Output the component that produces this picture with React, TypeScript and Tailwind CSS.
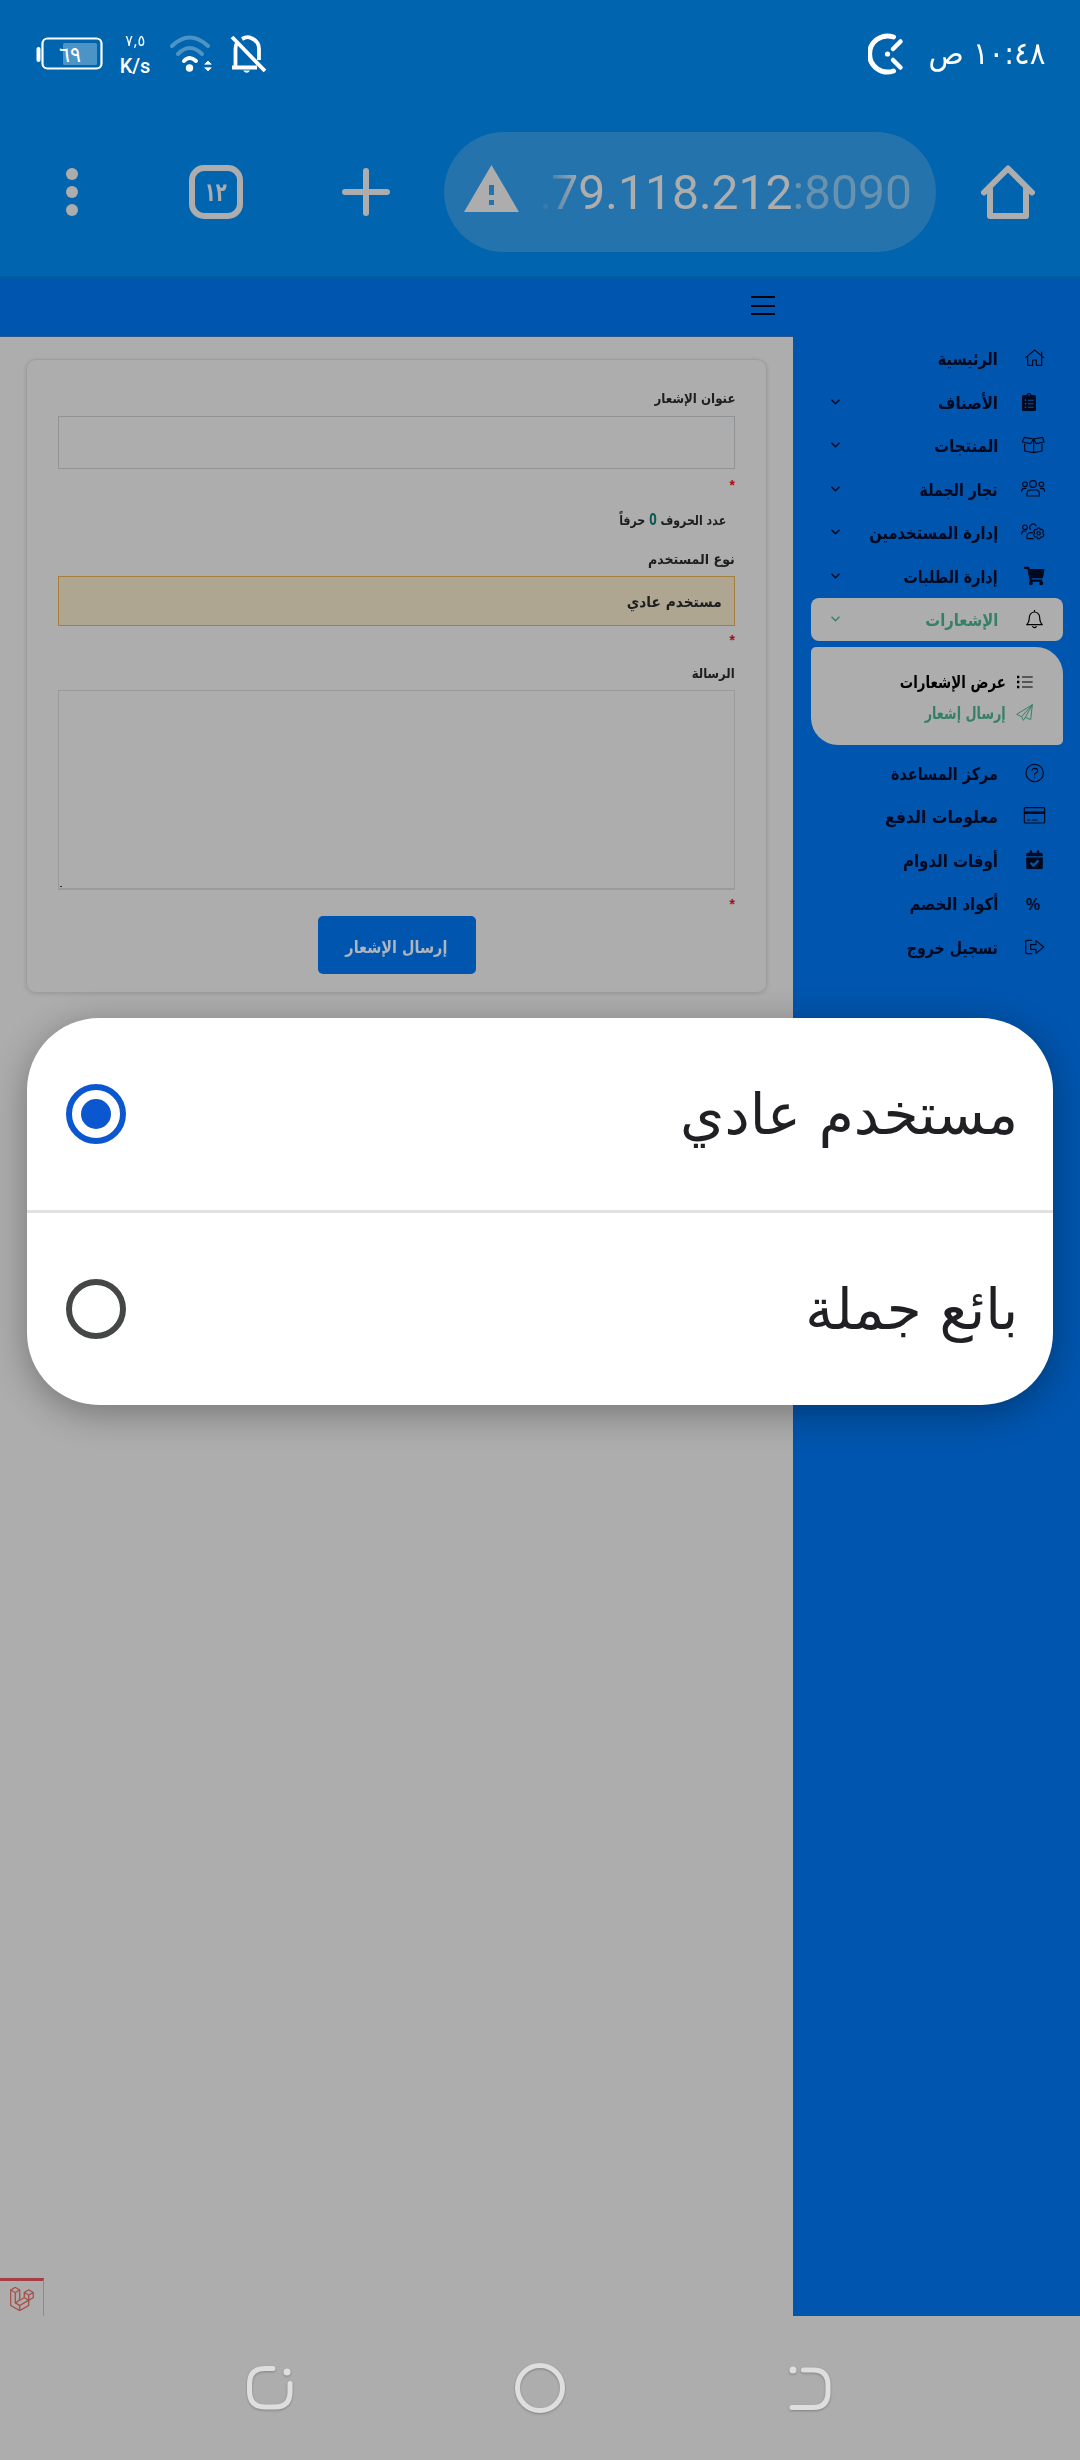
import { useLayoutEffect, useRef, type ReactNode } from "react";
import { FaClipboardList, FaShoppingCart, FaCalendarCheck, FaRegCreditCard } from "react-icons/fa";
import { SiLaravel } from "react-icons/si";

/** Single line of right-to-left text, condensed or stretched to an exact width. */
function Fit({ w, className = "", children }: { w: number; className?: string; children: ReactNode }) {
  const ref = useRef<HTMLSpanElement>(null);
  useLayoutEffect(() => {
    const el = ref.current;
    if (!el) return;
    el.style.transform = "none";
    const natural = el.getBoundingClientRect().width;
    if (natural > 0) el.style.transform = `scaleX(${w / natural})`;
  }, [w]);
  return (
    <span dir="rtl" className={`flex shrink-0 ${className}`} style={{ width: w }}>
      <span ref={ref} className="block shrink-0 origin-right whitespace-nowrap">
        {children}
      </span>
    </span>
  );
}

function Glyph({ y, className = "", children }: { y: number; className?: string; children: ReactNode }) {
  return (
    <svg
      width="26"
      height="22"
      viewBox={`720 ${y} 78 66`}
      fill="none"
      stroke="currentColor"
      strokeWidth="3.500"
      strokeLinejoin="round"
      strokeLinecap="round"
      className={`shrink-0 overflow-visible ${className}`}
    >
      {children}
    </svg>
  );
}

const HomeGlyph = (
  <Glyph y={52}>
    <path d="M737 84L764 61L791 84M743 80V107H758V91H769V107H785V80M785 78V67" />
  </Glyph>
);
const ClipboardGlyph = (
  <Glyph y={181}>
    <FaClipboardList x={719} y={186} size={56} strokeWidth={0} />
  </Glyph>
);
const BoxGlyph = (
  <Glyph y={312}>
    <path d="M734 342V363L761 368L786 363V342M761 328V368M761 327L733 322L727 336L752 341ZM761 327L788 322L792 336L769 341Z" />
  </Glyph>
);
const UsersGlyph = (
  <Glyph y={443}>
    <circle cx="759" cy="461" r="10" />
    <circle cx="735" cy="462" r="7" />
    <circle cx="784" cy="462" r="7" />
    <path d="M741 497V490Q741 479 752 479H767Q778 479 778 490V497ZM725 483Q725 475 733 474H738M794 483Q794 475 786 474H781" />
  </Glyph>
);
const UsersCogGlyph = (
  <Glyph y={575}>
    <circle cx="735" cy="594" r="7" />
    <path d="M751 600A10 10 0 1 1 768 589M760 628H741V621Q741 611 752 610H757M725 614Q725 606 733 605H738" />
    <circle cx="776" cy="612" r="5" />
    <path d="M773 596H779L781 601L786 600L791 606L788 611L792 616L788 623L782 623L779 628H773L771 623L765 623L760 616L764 612L761 606L765 600L771 601Z" />
  </Glyph>
);
const CartGlyph = (
  <Glyph y={703}>
    <FaShoppingCart x={732} y={705} size={62} strokeWidth={0} />
  </Glyph>
);
const BellGlyph = (
  <Glyph y={834} className="text-black">
    <path d="M740 884C748 877 748 872 748 862A15.500 16 0 0 1 779 862C779 872 779 877 787 884ZM763.500 841V846M758 890Q764 896 769 890" />
  </Glyph>
);
const HelpGlyph = (
  <Glyph y={363}>
    <circle cx="764" cy="396" r="26" />
    <path d="M756 388Q758 382 764 382Q773 382 773 389Q773 394 764 398V401M764 409V410" />
  </Glyph>
);
const CardGlyph = (
  <Glyph y={494}>
    <rect x="733" y="502" width="61" height="46" rx="4" />
    <path d="M733 517H794" strokeWidth="8" strokeLinecap="butt" />
    <path d="M743 539H750M757 539H771" />
  </Glyph>
);
const CalendarGlyph = (
  <Glyph y={625}>
    <FaCalendarCheck x={735} y={629} size={57} strokeWidth={0} />
  </Glyph>
);
const LogoutGlyph = (
  <Glyph y={885}>
    <path d="M755 898H742Q737 898 737 903V933Q737 938 742 938H755M752 911H768V899L791 918L768 937V925H752Z" />
  </Glyph>
);
const PercentGlyph = (
  <span className="flex w-[26px] shrink-0 justify-center pr-0 pl-0 font-['Open_Sans'] text-[17px] leading-none font-semibold">
    %
  </span>
);

type Item = { label: string; w: number; icon: ReactNode; menu?: boolean; active?: boolean };

const topItems: Item[] = [
  { label: "الرئيسية", w: 60, icon: HomeGlyph },
  { label: "الأصناف", w: 60, icon: ClipboardGlyph, menu: true },
  { label: "المنتجات", w: 64, icon: BoxGlyph, menu: true },
  { label: "تجار الجملة", w: 78, icon: UsersGlyph, menu: true },
  { label: "إدارة المستخدمين", w: 129, icon: UsersCogGlyph, menu: true },
  { label: "إدارة الطلبات", w: 94, icon: CartGlyph, menu: true },
  { label: "الإشعارات", w: 73, icon: BellGlyph, menu: true, active: true },
];

const bottomItems: Item[] = [
  { label: "مركز المساعدة", w: 107, icon: HelpGlyph },
  { label: "معلومات الدفع", w: 113, icon: CardGlyph },
  { label: "أوقات الدوام", w: 95, icon: CalendarGlyph },
  { label: "أكواد الخصم", w: 89, icon: PercentGlyph },
  { label: "تسجيل خروج", w: 91, icon: LogoutGlyph },
];

function NavRow({ item }: { item: Item }) {
  return (
    <div
      className={`flex h-[43.5px] items-center rounded-[8px] pr-[17px] pl-[20px] ${
        item.active ? "bg-[#adadad] text-[#348069]" : "text-[#00091d]"
      }`}
    >
      {item.icon}
      <Fit w={item.w} className="mr-[22px] pt-[2px] text-[17.500px] leading-[24px] font-bold">
        {item.label}
      </Fit>
      {item.menu && (
        <svg width="9" height="6" viewBox="0 0 9 6" className="mr-auto" fill="none" stroke="currentColor" strokeWidth="1.4">
          <path d="M0.500 0.700L4.500 4.700L8.500 0.700" />
        </svg>
      )}
    </div>
  );
}

function StatusBar() {
  return (
    <div dir="ltr" className="flex h-[108px] items-center text-white">
      <svg width="68" height="34" viewBox="0 0 68 34" className="ml-[36px]" fill="none">
        <rect x="0.500" y="10" width="4" height="15" rx="2" fill="white" />
        <rect x="6.500" y="1.500" width="59" height="30" rx="5" stroke="white" strokeWidth="2.200" />
        <rect x="27" y="6" width="34" height="22" rx="1.500" fill="#4d94c6" />
        <text x="34" y="24.500" fontFamily="DejaVu Sans" fontSize="22" textLength="22" lengthAdjust="spacingAndGlyphs" fill="white" textAnchor="middle">
          ٦٩
        </text>
      </svg>
      <div className="ml-[16px] flex w-[30px] flex-col items-center">
        <Fit w={20} className="text-[16px] leading-[18px]">
          ٧,٥
        </Fit>
        <span className="mt-[6px] font-[Roboto] text-[20px] leading-[20px] font-medium">K/s</span>
      </div>
      <svg width="44" height="38" viewBox="0 0 44 38" className="ml-[19px]" fill="none" strokeLinecap="round" strokeWidth="4">
        <path d="M3 11Q20.500 -6 39 11" stroke="#4d94c6" />
        <path d="M9 19Q20.500 7 33 19" stroke="#4d94c6" />
        <path d="M15 26Q20.500 20 27 26" stroke="white" />
        <circle cx="20.500" cy="33" r="3.700" fill="white" />
        <path d="M36 29L39 26L42 29ZM36 33L39 36L42 33Z" fill="white" stroke="white" strokeWidth="0.800" />
      </svg>
      <svg width="38" height="40" viewBox="0 0 38 40" className="ml-[17px]" fill="none" stroke="white" strokeWidth="3.800">
        <path d="M2 3L35 37" />
        <path d="M2 33.500H27M5.500 33.500V15Q5.500 11 7.500 8M12 5Q17 2 21 4Q29 7 29 15V26" />
        <path d="M13 36.500Q17 41 20 36.500Z" fill="white" stroke="none" />
      </svg>
      <svg width="38" height="42" viewBox="0 0 38 42" className="ml-auto" fill="none" stroke="white" strokeWidth="5" strokeLinecap="round">
        <path d="M25.500 4A18 18 0 1 0 25.500 38" />
        <path d="M25 16L32.500 8.500M25 27L32.500 34.500" strokeWidth="4.500" />
        <circle cx="19.500" cy="21" r="2.600" fill="white" stroke="none" />
      </svg>
      <Fit w={117} className="mr-[35px] ml-[22px] pb-[3px] text-[31px] leading-[40px]">
        ١٠:٤٨ ص
      </Fit>
    </div>
  );
}

function BrowserBar() {
  return (
    <div dir="ltr" className="flex h-[168px] items-center text-[#adadad]">
      <svg width="12" height="48" viewBox="0 0 12 48" className="ml-[66px]" fill="currentColor">
        <circle cx="6" cy="6" r="6" />
        <circle cx="6" cy="24" r="6" />
        <circle cx="6" cy="42" r="6" />
      </svg>
      <div className="ml-[111px] flex h-[54px] w-[54px] items-center justify-center rounded-[15px] border-[6px] border-[#adadad]">
        <Fit w={22} className="text-[26px] leading-[24px] font-bold">
          ١٢
        </Fit>
      </div>
      <svg width="48" height="48" viewBox="0 0 48 48" className="ml-[99px]" stroke="currentColor" strokeWidth="6" strokeLinecap="round">
        <path d="M24 3V45M3 24H45" />
      </svg>
      <div className="ml-[54px] flex h-[120px] w-[492px] items-center rounded-full bg-[#2473ad]">
        <svg width="55" height="47" viewBox="0 0 55 47" className="mb-[7px] ml-[20px]">
          <path fill="currentColor" fillRule="evenodd" d="M27.500 0L55 47H0ZM25 20V30H30V20ZM25 35V40H30V35Z" />
        </svg>
        <div className="mr-[24px] ml-auto flex w-[372px] justify-end overflow-hidden pt-px font-[Roboto] text-[48px] leading-[60px] whitespace-nowrap [mask-image:linear-gradient(to_right,transparent_0px,black_40px)]">
          <span>.79.118.212</span>
          <span className="text-[#6892ae]">:8090</span>
        </div>
      </div>
      <svg width="54" height="54" viewBox="0 0 54 54" className="ml-[45px]" fill="none" stroke="currentColor" strokeWidth="6" strokeLinejoin="round" strokeLinecap="round">
        <path d="M3 27.500L27 3.500L51 27.500M9 24V51H45V24" />
      </svg>
    </div>
  );
}

function Sidebar() {
  return (
    <aside className="h-full w-[287px] shrink-0 bg-[#0055ae] pt-[57.700px] pr-[17px] pl-[18px]">
      {topItems.map((item) => (
        <NavRow key={item.label} item={item} />
      ))}
      <div className="mt-[6px] flex h-[98px] flex-col rounded-[5px_27px_5px_27px] bg-[#adadad] pt-[19px] pr-[30px]">
        <div className="flex h-[31px] items-center text-black">
          <svg width="17" height="14" viewBox="0 0 51 42" fill="none" stroke="currentColor" strokeWidth="3">
            <path d="M18 6H50M18 21H50M18 36H50" />
            <path d="M3 6H10M3 21H10M3 36H10" strokeWidth="7" />
          </svg>
          <Fit w={106} className="mr-[10px] text-[17px] leading-[24px] font-bold">
            عرض الإشعارات
          </Fit>
        </div>
        <div className="flex h-[31px] items-center text-[#348069]">
          <svg width="17" height="17" viewBox="707 189 51 51" fill="none" stroke="currentColor" strokeWidth="3" strokeLinejoin="round">
            <path d="M709 220L756 191L751 236L735 229L729 238L724 227ZM724 227L756 191L735 229" />
          </svg>
          <Fit w={81} className="mr-[10px] text-[17px] leading-[24px] font-bold">
            إرسال إشعار
          </Fit>
        </div>
      </div>
      <div className="mt-[6px]">
        {bottomItems.map((item) => (
          <NavRow key={item.label} item={item} />
        ))}
      </div>
    </aside>
  );
}

function Star() {
  return <span className="block h-[12px] font-['Liberation_Sans'] text-[14px] leading-[16px] font-bold text-[#a80f12]">*</span>;
}

function FormCard() {
  return (
    <div className="mt-[22px] mr-[26px] flex h-[634px] w-[741px] flex-col rounded-[10px] border border-[#9d9d9d] px-[31px] pt-[29px] text-[13.500px] font-bold text-[#1c1e20] shadow-[0_1px_4px_rgba(0,0,0,0.12)]">
      <Fit w={81} className="h-[27px] leading-[18px]">
        عنوان الإشعار
      </Fit>
      <div className="h-[53px] shrink-0 border border-[#919497]" />
      <div className="h-[41px] shrink-0 pt-[8px]">
        <Star />
      </div>
      <div className="flex h-[40px] shrink-0 items-start pr-[9px]">
        <Fit w={107} className="leading-[18px]">
          عدد الحروف <span className="font-['Open_Sans'] text-[16px] text-[#08574d]">0</span> حرفاً
        </Fit>
      </div>
      <Fit w={87} className="h-[26px] leading-[18px]">
        نوع المستخدم
      </Fit>
      <div className="flex h-[50px] shrink-0 items-center border-[1.500px] border-[#a67e3e] bg-[#aea690] pt-[2px] pr-[12px] text-[15px]">
        <Fit w={95} className="leading-[20px]">
          مستخدم عادي
        </Fit>
      </div>
      <div className="h-[38px] shrink-0 pt-[6px]">
        <Star />
      </div>
      <Fit w={43} className="h-[26px] leading-[18px]">
        الرسالة
      </Fit>
      <div dir="ltr" className="flex h-[200px] shrink-0 items-end border border-b-2 border-[#999b9d] p-px">
        <span className="h-px w-[2px] bg-[#333]" />
      </div>
      <div className="h-[26px] shrink-0 pt-[6px]">
        <Star />
      </div>
      <button className="flex h-[58px] w-[158px] items-center justify-center self-center rounded-[5px] bg-[#0055ae] text-[17px] text-[#adb5bd]">
        <Fit w={102} className="mt-[3px] leading-[24px]">
          إرسال الإشعار
        </Fit>
      </button>
    </div>
  );
}

function SystemNav() {
  return (
    <div dir="ltr" className="flex h-[144px] items-start bg-[#adadad] pt-[46px]">
      <svg width="50" height="54" viewBox="0 0 50 54" className="ml-[245px] drop-shadow-[0_1px_1px_rgba(0,0,0,0.25)]" fill="none" stroke="#dedede" strokeWidth="5" strokeLinecap="round">
        <path d="M28 6.500H20Q4.500 6.500 4.500 22V29Q4.500 45 20 45H30Q45 45 45 30V21.500" />
        <circle cx="42" cy="10" r="3.500" fill="#dedede" stroke="none" />
      </svg>
      <svg width="54" height="54" viewBox="0 0 54 54" className="ml-[218px] drop-shadow-[0_1px_1px_rgba(0,0,0,0.25)]" fill="none" stroke="#dedede" strokeWidth="5">
        <circle cx="27" cy="26" r="22.500" />
      </svg>
      <svg width="46" height="54" viewBox="0 0 46 54" className="ml-[220px] drop-shadow-[0_1px_1px_rgba(0,0,0,0.25)]" fill="none" stroke="#dedede" strokeWidth="5" strokeLinecap="round">
        <path d="M16.500 8H26Q41 8 41 23V30Q41 45.500 26 45.500H5" />
        <circle cx="6" cy="8" r="3.500" fill="#dedede" stroke="none" />
      </svg>
    </div>
  );
}

function Option({ label, w, checked }: { label: string; w: number; checked?: boolean }) {
  return (
    <div className="flex h-[192px] items-center justify-between pr-[35px] pl-[39px]">
      <Fit w={w} className="text-[57px] leading-[80px] text-[#1f1f24]">
        {label}
      </Fit>
      <span
        className={`flex h-[60px] w-[60px] items-center justify-center rounded-full border-[6px] ${
          checked ? "border-[#0b57d0]" : "border-[#444746]"
        }`}
      >
        {checked && <span className="h-[30px] w-[30px] rounded-full bg-[#0b57d0]" />}
      </span>
    </div>
  );
}

export default function App() {
  return (
    <div dir="rtl" className="relative h-[2460px] w-[1080px] overflow-hidden bg-[#adadad] font-['DejaVu_Sans',sans-serif]">
      <header className="h-[279px] border-b-[3px] border-[#005c9f] bg-[#0065ae]">
        <StatusBar />
        <BrowserBar />
      </header>
      <div className="flex h-[2037px]">
        <Sidebar />
        <main className="flex w-[793px] flex-col">
          <div className="flex h-[58px] shrink-0 items-start border-b border-[#28568c] bg-[#0055ae] pt-[17px] pr-[18px]">
            <div className="flex w-[24px] flex-col gap-[6.500px]">
              <span className="h-[2px] bg-[#00030f]" />
              <span className="h-[2px] bg-[#00030f]" />
              <span className="h-[2px] bg-[#00030f]" />
            </div>
          </div>
          <FormCard />
          <div className="mt-auto flex h-[38px] w-[44px] items-center justify-center self-end border-t-[3px] border-r border-t-[#a53f45] border-r-[#8c8c8c]">
            <SiLaravel size={24} color="#a8433b" stroke="#a8433b" strokeWidth={0.4} />
          </div>
        </main>
      </div>
      <SystemNav />
      <div className="absolute top-[1018px] left-[27px] w-[1026px] overflow-hidden rounded-[72px] bg-white shadow-[0_8px_36px_rgba(0,0,0,0.32)]">
        <Option label="مستخدم عادي" w={338} checked />
        <div className="h-[3px] bg-[#e1e1e1]" />
        <Option label="بائع جملة" w={213} />
      </div>
    </div>
  );
}
